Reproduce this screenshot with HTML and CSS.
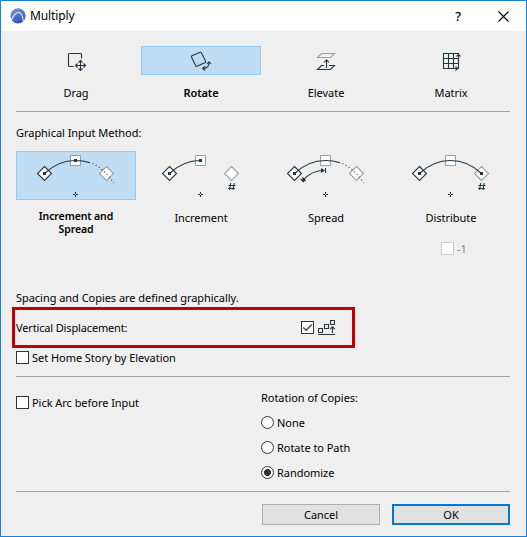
FILE: index.html
```html
<!DOCTYPE html>
<html lang="en">
<head>
    <meta charset="UTF-8">
    <meta name="viewport" content="width=device-width, initial-scale=1.0">
    <title>Multiply</title>
    <link rel="stylesheet" href="styles.css">
</head>
<body>
    <div class="window">
        <header class="titlebar">
            <svg class="logo" width="16" height="16" viewBox="0 0 16 16">
                <defs>
                    <linearGradient id="logo-fill" x1="0" y1="0" x2="0.5" y2="1">
                        <stop offset="0" stop-color="#7f9fd8"/>
                        <stop offset="1" stop-color="#2f55bd"/>
                    </linearGradient>
                </defs>
                <circle cx="8" cy="7.800" r="7.600" fill="url(#logo-fill)"/>
                <path d="M1 12.500C3.500 7.500 5.500 4.500 8.300 4.500C11.500 4.500 13 8.500 13.300 13.500" fill="none" stroke="#e6edfa" stroke-width="1.200"/>
            </svg>
            <h1>Multiply</h1>
            <span class="help">?</span>
            <svg class="close" width="11" height="11" viewBox="0 0 11 11">
                <path d="M.5.500l10 10M10.500.500l-10 10" stroke="#000" stroke-width="1.100"/>
            </svg>
        </header>

        <main class="content">
            <section class="modes">
                <div class="option">
                    <div class="icon">
                        <svg viewBox="1 1 118 27" class="line">
                            <path d="M57.500 20.500H53.500Q52.500 20.500 52.500 19.500V8.500Q52.500 7.500 53.500 7.500H64.500Q65.500 7.500 65.500 8.500V12.500"/>
                            <path d="M64.500 15V24M60 19.500H69"/>
                            <path d="M62.500 16.500l2-2 2 2M62.500 22.500l2 2 2-2M61.500 17.500l-2 2 2 2M67.500 17.500l2 2-2 2"/>
                        </svg>
                    </div>
                    <p>Drag</p>
                </div>
                <div class="option selected">
                    <div class="icon">
                        <svg viewBox="1 1 118 27" class="line">
                            <path d="M51 9.800L59.200 6.300Q60 6 60.500 6.900L64.600 15.200Q65 16 64.200 16.500L56 20.300Q55.200 20.600 54.700 19.800L50.500 11Q50.200 10.200 51 9.800Z"/>
                            <path d="M62 22.500Q68 22.500 68 16.500"/>
                            <path d="M64 20.500l-2.300 2 2.300 2M66 18l2-2.200 2 2.200" />
                        </svg>
                    </div>
                    <p>Rotate</p>
                </div>
                <div class="option">
                    <div class="icon">
                        <svg viewBox="1 1 118 27" class="line">
                            <path class="pale" d="M55.500 7.500H68.500L64.500 11.500H51.500Z"/>
                            <path d="M58 19.500H55.500L51.500 23.500H64.500L68.500 19.500H63"/>
                            <path d="M60.500 22V14M58 16.500l2.500-2.700 2.500 2.700"/>
                        </svg>
                    </div>
                    <p>Elevate</p>
                </div>
                <div class="option">
                    <div class="icon">
                        <svg viewBox="1 1 118 27" class="line">
                            <path d="M52.500 7.500H67.500V22.500H52.500ZM57.500 7.500V22.500M62.500 7.500V22.500M52.500 12.500H67.500M52.500 17.500H67.500"/>
                            <path d="M65.500 10.500l2-2 2 2M64.500 20.500l2 2-2 2"/>
                        </svg>
                    </div>
                    <p>Matrix</p>
                </div>
            </section>

            <hr>

            <h2>Graphical Input Method:</h2>
            <section class="methods">
                <div class="option selected">
                    <div class="icon">
                        <svg viewBox="1 1 118 47" class="line">
                            <path class="handle" d="M28.500 15.500l7 7-7 7-7-7Z"/>
                            <rect class="handle pale" x="54.500" y="4.500" width="10" height="10" rx=".5"/>
                            <path class="handle pale" d="M90.500 15.500l7 7-7 7-7-7Z"/>
                            <path d="M28.500 22.500Q42 9.500 59.500 9.500Q67 9.500 74 11.700"/>
                            <path class="dots" d="M76.500 12.500Q87 17 98 32"/>
                            <path class="point" d="M27 21h3v3h-3zM58 8h3v3h-3z"/>
                            <path d="M57 43.500h2M60 43.500h2M59.500 41v2M59.500 44v2"/>
                        </svg>
                    </div>
                    <p>Increment and<br>Spread</p>
                </div>
                <div class="option">
                    <div class="icon">
                        <svg viewBox="1 1 118 47" class="line">
                            <path class="handle" d="M28.500 15.500l7 7-7 7-7-7Z"/>
                            <rect class="handle pale" x="54.500" y="4.500" width="10" height="10" rx=".5"/>
                            <path class="handle pale" d="M90.500 15.500l7 7-7 7-7-7Z"/>
                            <path d="M28.500 22.500Q42 9.500 59.500 9.500"/>
                            <path class="point" d="M27 21h3v3h-3zM58 8h3v3h-3z"/>
                            <path d="M57 43.500h2M60 43.500h2M59.500 41v2M59.500 44v2"/>
                            <path d="M87.500 34.500h7M87 37.500h7M89.700 32l-1.200 7M93.200 32l-1.200 7"/>
                        </svg>
                    </div>
                    <p>Increment</p>
                </div>
                <div class="option">
                    <div class="icon">
                        <svg viewBox="1 1 118 47" class="line">
                            <path class="handle" d="M28.500 15.500l7 7-7 7-7-7Z"/>
                            <rect class="handle pale" x="54.500" y="4.500" width="10" height="10" rx=".5"/>
                            <path class="handle pale" d="M90.500 15.500l7 7-7 7-7-7Z"/>
                            <path d="M28.500 22.500Q42 9.500 59.500 9.500Q67 9.500 74 11.700"/>
                            <path class="dots" d="M76.500 12.500Q87 17 98 32"/>
                            <path class="point" d="M27 21h3v3h-3z"/>
                            <path d="M37 29Q46 19.500 58 19.500"/>
                            <path d="M34.500 28l3.500 3"/>
                            <path class="point" d="M36 30.500l.5-5 3.700 4.200zM59 19.500l-4-2.500v5zM59 17h1v5h-1z"/>
                            <path d="M57 43.500h2M60 43.500h2M59.500 41v2M59.500 44v2"/>
                        </svg>
                    </div>
                    <p>Spread</p>
                </div>
                <div class="option">
                    <div class="icon">
                        <svg viewBox="1 1 118 47" class="line">
                            <path class="handle" d="M28.500 15.500l7 7-7 7-7-7Z"/>
                            <rect class="handle pale" x="54.500" y="4.500" width="10" height="10" rx=".5"/>
                            <path class="handle pale" d="M90.500 15.500l7 7-7 7-7-7Z"/>
                            <path d="M28.500 22.500Q42 9.500 59.500 9.500Q77 9.500 90.500 22.500"/>
                            <path class="point" d="M27 21h3v3h-3zM89 21h3v3h-3z"/>
                            <path d="M57 43.500h2M60 43.500h2M59.500 41v2M59.500 44v2"/>
                            <path d="M87.500 34.500h7M87 37.500h7M89.700 32l-1.200 7M93.200 32l-1.200 7"/>
                        </svg>
                    </div>
                    <p>Distribute</p>
                    <div class="check disabled"><span class="box"></span><span>-1</span></div>
                </div>
            </section>

            <p class="note">Spacing and Copies are defined graphically.</p>

            <div class="highlight">
                <span class="caption">Vertical Displacement:</span>
                <span class="box">
                    <svg width="11" height="11" viewBox="0 0 11 11"><path d="M1.300 5.500L4.200 8.300L9.800 2.500" fill="none" stroke="#444" stroke-width="1.400"/></svg>
                </span>
                <svg class="steps line" width="17" height="15" viewBox="0 0 17 15">
                    <path d="M.5 8.500h4v4h-4zM6.500 4.500h4v4h-4zM12.500.500h4v4h-4zM0 14.500h17"/>
                    <path d="M14.500 13V7M12.300 9l2.200-2.300L16.700 9"/>
                </svg>
            </div>

            <div class="check home"><span class="box"></span><span>Set Home Story by Elevation</span></div>

            <hr>

            <section class="input">
                <div class="check"><span class="box"></span><span>Pick Arc before Input</span></div>
                <div class="rotation">
                    <h2>Rotation of Copies:</h2>
                    <div class="check"><span class="radio"></span><span>None</span></div>
                    <div class="check"><span class="radio"></span><span>Rotate to Path</span></div>
                    <div class="check"><span class="radio on"></span><span>Randomize</span></div>
                </div>
            </section>

            <hr>

            <footer class="buttons">
                <button>Cancel</button>
                <button class="default">OK</button>
            </footer>
        </main>
    </div>
</body>
</html>
```
FILE: styles.css
```css
* {
    box-sizing: border-box;
}
body {
    margin: 0;
    font-family: "Noto Sans", "Open Sans", sans-serif;
    font-size: 11px;
    line-height: 14px;
    letter-spacing: -0.04px;
    color: #000;
}
h1, h2, p {
    margin: 0;
    font-size: inherit;
    font-weight: normal;
}
hr {
    margin: 0;
    border: 0;
    height: 1px;
    background: #a0a0a0;
}
svg {
    display: block;
}
.window {
    width: 527px;
    height: 537px;
    border: 1px solid #1880d7;
    background: #efefef;
}
.titlebar {
    height: 30px;
    padding: 0 17px 0 9px;
    display: flex;
    align-items: center;
    background: #fff;
}
.titlebar h1 {
    margin-left: 4px;
    flex: 1;
    font-size: 12px;
    letter-spacing: -0.1px;
}
.help {
    margin-right: 37px;
    font-size: 13px;
    font-weight: 500;
}
.content {
    padding: 15px 16px 0 15px;
}
.modes, .methods {
    display: grid;
    grid-template-columns: repeat(4, 120px);
    gap: 5px;
    text-align: center;
}
.modes {
    height: 65px;
}
.methods {
    height: 140px;
    margin-top: 11px;
}
.icon {
    border: 1px solid transparent;
}
.option p {
    margin-top: 11px;
}
.methods .option.selected p {
    margin-top: 10px;
    font-size: 10.5px;
    line-height: 13px;
}
.selected .icon {
    background: #bfdcf3;
    border-color: #90c8f6;
}
.selected p {
    font-weight: 600;
    letter-spacing: -0.1px;
}
.line {
    fill: none;
    stroke: #263640;
    stroke-width: 1.1;
}
.line .handle {
    fill: #fff;
}
.line .pale {
    stroke: #9b9fa2;
}
.line .dots {
    stroke-dasharray: 1 2.6;
}
.line .point {
    fill: #263640;
    stroke: none;
}
h2 {
    height: 14px;
}
.modes + hr + h2 {
    margin-top: 14px;
}
.check {
    display: flex;
    align-items: center;
    gap: 3px;
    height: 13px;
}
.box {
    width: 13px;
    height: 13px;
    border: 1px solid #333;
    background: #fff;
}
.disabled {
    margin: 17px 0 0 50px;
    color: #838383;
}
.disabled .box {
    border-color: #ccc;
}
.note {
    height: 16px;
}
.highlight {
    display: flex;
    align-items: center;
    width: 343px;
    height: 41px;
    margin-left: -4px;
    padding: 0 17px 0 1px;
    border: 3px solid #c00000;
}
.caption {
    flex: 1;
    letter-spacing: -0.15px;
}
.steps {
    margin-left: 4px;
}
.home {
    margin: 3px 0 12px;
}
.input {
    display: grid;
    grid-template-columns: 245px 1fr;
    height: 114px;
    padding-top: 14px;
}
.input > .check {
    margin-top: 5px;
}
.rotation .check {
    margin-bottom: 12px;
}
.rotation h2 {
    margin-bottom: 11px;
}
.radio {
    width: 13px;
    height: 13px;
    border: 1px solid #333;
    border-radius: 50%;
    background: #fff;
}
.radio.on {
    background: radial-gradient(circle, #333 3.2px, #fff 3.8px);
}
.buttons {
    display: flex;
    justify-content: flex-end;
    gap: 12px;
    padding-top: 12px;
}
button {
    width: 118px;
    height: 21px;
    padding: 0;
    border: 1px solid #adadad;
    background: #e1e1e1;
    font: inherit;
    letter-spacing: inherit;
    color: inherit;
}
.default {
    border: 2px solid #0078d7;
}
```
